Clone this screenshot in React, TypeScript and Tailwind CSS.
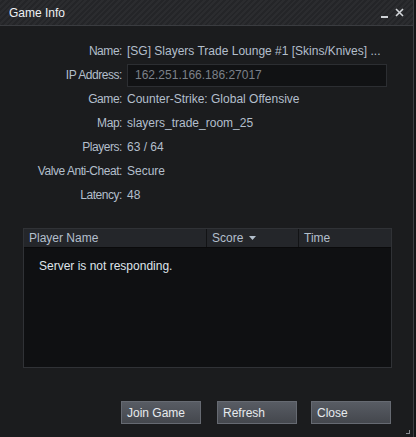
const rows: { label: string; value: string }[] = [
  { label: "Game:", value: "Counter-Strike: Global Offensive" },
  { label: "Map:", value: "slayers_trade_room_25" },
  { label: "Players:", value: "63 / 64" },
  { label: "Valve Anti-Cheat:", value: "Secure" },
  { label: "Latency:", value: "48" },
];

function Button({ children, className }: { children: string; className?: string }) {
  return (
    <button
      className={`h-[23px] w-[80px] border border-[#666a72] bg-gradient-to-b from-[#585c64] to-[#44474d] pl-[5px] text-left text-[12px] text-[#e6eaee] ${className ?? ""}`}
    >
      {children}
    </button>
  );
}

export default function App() {
  return (
    <div
      className="flex h-[437px] w-[416px] bg-[#141517] text-[12px] text-[#b3bfcc]"
      style={{ fontFamily: '"Liberation Sans", Arial, sans-serif' }}
    >
      <div className="flex w-[413px] flex-col bg-[#1b1c1e]">
        {/* title bar */}
        <div className="flex h-[26px] items-center border-b border-[#3a3c40] bg-[repeating-linear-gradient(135deg,#2b2c2f_0px,#2b2c2f_2px,#242528_2px,#242528_4px)] pl-[9px] pr-[9px]">
          <span className="text-[12px] text-[#eef1f4]">Game Info</span>
          <div className="ml-auto flex items-center gap-[7px]">
            <div className="mt-[8px] h-[2px] w-[7px] bg-[#cfd2d6]" />
            <svg width="9" height="9" viewBox="0 0 9 9">
              <path d="M1 1L8 8M8 1L1 8" stroke="#d4d7db" strokeWidth="1.6" />
            </svg>
          </div>
        </div>

        {/* info */}
        <div className="mt-[13px] flex flex-col">
          <div className="flex h-[24px] items-center">
            <span className="w-[122px] text-right tracking-[-0.45px]">Name:</span>
            <span className="ml-[5px]">[SG] Slayers Trade Lounge #1 [Skins/Knives] ...</span>
          </div>
          <div className="flex h-[24px] items-center">
            <span className="w-[122px] text-right tracking-[-0.45px]">IP Address:</span>
            <div className="ml-[5px] flex h-[23px] w-[260px] items-center border border-[#2c2e32] bg-[#111214] pl-[7px] text-[#7c8189]">
              162.251.166.186:27017
            </div>
          </div>
          {rows.map((r) => (
            <div key={r.label} className="flex h-[24px] items-center">
              <span className="w-[122px] text-right tracking-[-0.45px]">{r.label}</span>
              <span className="ml-[5px]">{r.value}</span>
            </div>
          ))}
        </div>

        {/* players table */}
        <div className="ml-[23px] mt-[21px] flex h-[140px] w-[369px] flex-col border border-[#303236] bg-[#0f1012]">
          <div className="flex h-[19px] items-center border-b border-[#0a0a0b] bg-[#24262a]">
            <div className="flex h-full w-[183px] items-center border-r border-[#121315] pl-[5px]">Player Name</div>
            <div className="flex h-full w-[92px] items-center gap-[6px] border-r border-[#121315] pl-[5px]">
              Score
              <svg width="7" height="4" viewBox="0 0 7 4">
                <path d="M0 0H7L3.5 4Z" fill="#b3bfcc" />
              </svg>
            </div>
            <div className="flex h-full items-center pl-[5px]">Time</div>
          </div>
          <div className="pl-[15px] pt-[9px] text-[#dfe4ea]">Server is not responding.</div>
        </div>

        {/* buttons */}
        <div className="mt-[33px] flex">
          <Button className="ml-[121px]">Join Game</Button>
          <Button className="ml-[16px]">Refresh</Button>
          <Button className="ml-[14px]">Close</Button>
        </div>

        <div className="mr-[3px] mt-auto mb-[3px] flex justify-end">
          <div className="h-[4px] w-[4px] border-b border-r border-[#8a8d92]" />
        </div>
      </div>
      <div className="w-[3px] border-l border-[#3c3e42] bg-[#141517]" />
    </div>
  );
}
